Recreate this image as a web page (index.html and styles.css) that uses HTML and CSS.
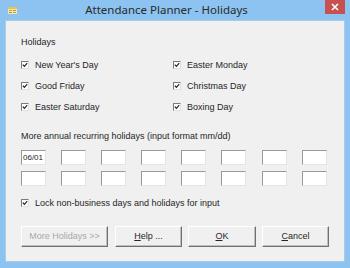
FILE: index.html
```html
<!DOCTYPE html>
<html lang="en">
<head>
    <meta charset="UTF-8">
    <title>Attendance Planner - Holidays</title>
    <link rel="stylesheet" href="styles.css">
</head>
<body>

    <div class="window">
        <!-- Barra de título -->
        <div class="titlebar">
            <svg class="app-icon" width="9" height="7" viewBox="0 0 9 7">
                <rect x="0" y="0" width="9" height="7" fill="#f4e9a0"/>
                <rect x="0" y="0" width="9" height="2" fill="#e8c060"/>
                <rect x="1" y="3" width="3" height="1" fill="#7fbf6a"/>
                <rect x="5" y="3" width="3" height="1" fill="#e07a6a"/>
                <rect x="1" y="5" width="3" height="1" fill="#e07a6a"/>
                <rect x="5" y="5" width="3" height="1" fill="#7fbf6a"/>
            </svg>
            <div class="title">Attendance Planner - Holidays</div>
            <div class="close">
                <svg width="8" height="8" viewBox="0 0 8 8">
                    <path d="M1 1 L7 7 M7 1 L1 7" stroke="#fff" stroke-width="1.6"/>
                </svg>
            </div>
        </div>

        <!-- Área do cliente -->
        <div class="client">
            <div class="group-label">Holidays</div>

            <div class="holidays">
                <label class="check"><span class="box"></span>New Year's Day</label>
                <label class="check"><span class="box"></span>Easter Monday</label>
                <label class="check"><span class="box"></span>Good Friday</label>
                <label class="check"><span class="box"></span>Christmas Day</label>
                <label class="check"><span class="box"></span>Easter Saturday</label>
                <label class="check"><span class="box"></span>Boxing Day</label>
            </div>

            <div class="group-label more-label">More annual recurring holidays (input format mm/dd)</div>

            <div class="dates">
                <div class="field">06/01</div>
                <div class="field"></div>
                <div class="field"></div>
                <div class="field"></div>
                <div class="field"></div>
                <div class="field"></div>
                <div class="field"></div>
                <div class="field"></div>
                <div class="field"></div>
                <div class="field"></div>
                <div class="field"></div>
                <div class="field"></div>
                <div class="field"></div>
                <div class="field"></div>
                <div class="field"></div>
                <div class="field"></div>
            </div>

            <label class="check lock"><span class="box"></span>Lock non-business days and holidays for input</label>

            <div class="buttons">
                <div class="btn btn-more disabled">More Holidays &gt;&gt;</div>
                <div class="btn btn-help"><u>H</u>elp ...</div>
                <div class="btn btn-ok"><u>O</u>K</div>
                <div class="btn btn-cancel"><u>C</u>ancel</div>
            </div>
        </div>
    </div>

</body>
</html>
```

FILE: styles.css
```css
/* Estilo global */
body {
    margin: 0;
    padding: 0;
    font-family: "Liberation Sans", Arial, sans-serif;
    font-size: 9px;
    color: #262626;
}

/* Janela */
.window {
    width: 350px;
    height: 268px;
    background-color: #8cc3f0;
    display: flex;
    flex-direction: column;
}

/* Barra de título */
.titlebar {
    height: 20px;
    display: flex;
    align-items: flex-start;
}

.app-icon {
    margin: 7px 0 0 8px;
}

.title {
    flex: 1;
    text-align: center;
    font-family: "Noto Sans", "Open Sans", sans-serif;
    font-size: 11.5px;
    line-height: 20px;
    color: #2a2a2a;
    margin-left: -9px;
}

.close {
    width: 20px;
    height: 14px;
    margin-right: 5px;
    background-color: #c75050;
    display: flex;
    align-items: center;
    justify-content: center;
}

/* Área do cliente */
.client {
    flex: 1;
    margin: 0 5px 6px 5px;
    background-color: #f0f0f0;
    padding: 16px 0 0 16px;
    box-shadow: 0 0 0 1px #a8cbe8 inset;
}

.group-label {
    line-height: 12px;
    height: 12px;
}

/* Checkboxes */
.holidays {
    display: grid;
    grid-template-columns: 152px 152px;
    grid-auto-rows: 21px;
    margin-top: 6px;
}

.check {
    display: flex;
    align-items: center;
    height: 21px;
    white-space: nowrap;
}

.box {
    width: 6px;
    height: 6px;
    margin-right: 6px;
    background-color: #fff;
    border-top: 1px solid #7a7a7a;
    border-left: 1px solid #7a7a7a;
    border-right: 1px solid #e0e0e0;
    border-bottom: 1px solid #e0e0e0;
    background-image: url("data:image/svg+xml;utf8,<svg xmlns='http://www.w3.org/2000/svg' width='6' height='6' viewBox='0 0 6 6'><path d='M0.8 2.6 L2.4 4.3 L5.2 1.2' fill='none' stroke='%23222' stroke-width='1.2'/></svg>");
    background-repeat: no-repeat;
}

/* Campos de data */
.more-label {
    margin-top: 13px;
}

.dates {
    display: grid;
    grid-template-columns: repeat(8, 25px);
    column-gap: 15.1px;
    row-gap: 6px;
    margin-top: 8px;
}

.field {
    height: 13px;
    background-color: #fff;
    border-top: 1px solid #9a9a9a;
    border-left: 1px solid #9a9a9a;
    border-right: 1px solid #e4e4e4;
    border-bottom: 1px solid #e4e4e4;
    font-size: 8px;
    line-height: 13px;
    padding-left: 1px;
}

.lock {
    margin-top: 11px;
    height: 12px;
}

/* Botões */
.buttons {
    display: flex;
    margin-top: 17px;
}

.btn {
    height: 19px;
    line-height: 19px;
    text-align: center;
    background-color: #f0f0f0;
    border-top: 1px solid #fff;
    border-left: 1px solid #fff;
    border-right: 1px solid #707070;
    border-bottom: 1px solid #707070;
    box-shadow: inset -1px -1px 0 #c0c0c0;
}

.disabled {
    color: #a8a8a8;
}

.btn-more {
    width: 85px;
}

.btn-help {
    width: 65px;
    margin-left: 7px;
}

.btn-ok {
    width: 66px;
    margin-left: 6px;
}

.btn-cancel {
    width: 65px;
    margin-left: 6px;
}
```
